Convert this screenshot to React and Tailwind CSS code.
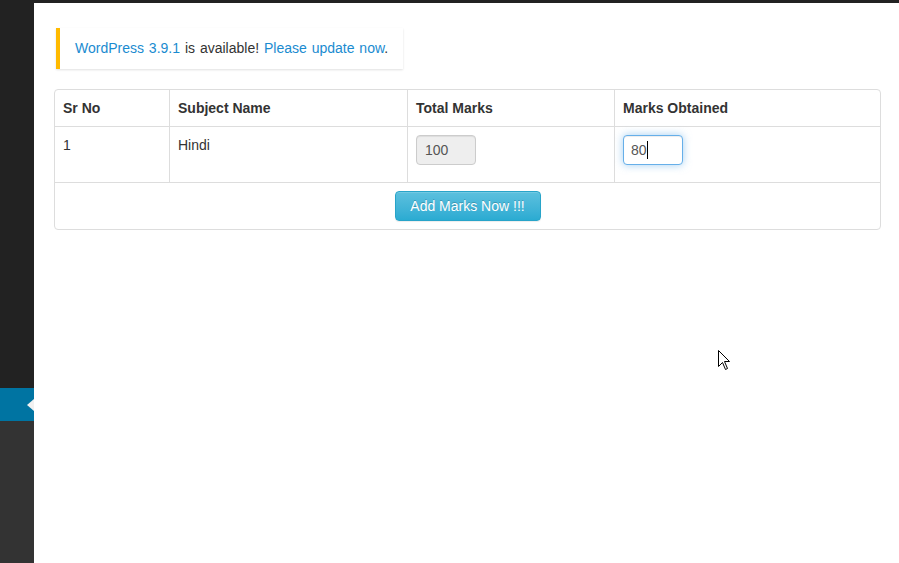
export default function App() {
  const font = { fontFamily: '"Liberation Sans", Arial, sans-serif' };
  return (
    <div className="w-[899px] h-[563px] flex flex-col bg-white overflow-hidden text-[#333]" style={font}>
      <div className="h-[3px] bg-[#222] shrink-0" />
      <div className="flex flex-1">
        <div className="w-[34px] flex flex-col shrink-0">
          <div className="h-[385px] bg-[#222]" />
          <div className="h-[33px] bg-[#0074a2] relative">
            <div className="absolute right-0 top-[11px] w-0 h-0 border-y-[6px] border-y-transparent border-r-[7px] border-r-[#f1f1f1]" />
          </div>
          <div className="flex-1 bg-[#333]" />
        </div>
        <div className="flex-1 relative pl-[20px] pr-[18px]">
          <div className="mt-[25px] ml-[2px] w-[347px] whitespace-nowrap bg-white border-l-4 border-[#ffba00] pl-[15px] py-[11px] text-[14px] leading-[19px] [word-spacing:1px] shadow-[0_1px_2px_0_rgba(0,0,0,0.12)]">
            <span className="text-[#1a8bd0]">WordPress 3.9.1</span> is available!{' '}
            <span className="text-[#1a8bd0]">Please update now</span>.
          </div>
          <div className="mt-[20px] border border-[#ddd] rounded-[4px] grid grid-cols-[114px_238px_207px_1fr] text-[14px] leading-[20px]">
            <div className="h-[37px] border-b border-[#ddd] px-[8px] pt-[8px] font-bold">Sr No</div>
            <div className="h-[37px] border-b border-l border-[#ddd] px-[8px] pt-[8px] font-bold">Subject Name</div>
            <div className="h-[37px] border-b border-l border-[#ddd] px-[8px] pt-[8px] font-bold">Total Marks</div>
            <div className="h-[37px] border-b border-l border-[#ddd] px-[8px] pt-[8px] font-bold">Marks Obtained</div>

            <div className="h-[56px] border-b border-[#ddd] px-[8px] pt-[8px]">1</div>
            <div className="h-[56px] border-b border-l border-[#ddd] px-[8px] pt-[8px]">Hindi</div>
            <div className="h-[56px] border-b border-l border-[#ddd] px-[8px] pt-[8px]">
              <div className="w-[60px] h-[30px] border border-[#ccc] rounded-[4px] bg-[#eee] pl-[8px] pt-[4px] text-[#555] shadow-[inset_0_1px_1px_rgba(0,0,0,0.075)]">100</div>
            </div>
            <div className="h-[56px] border-b border-l border-[#ddd] px-[8px] pt-[8px]">
              <div className="w-[60px] h-[30px] border border-[#66afe9] rounded-[4px] bg-white pl-[7px] pt-[4px] text-[#555] flex items-start shadow-[inset_0_1px_1px_rgba(0,0,0,0.075),0_0_8px_rgba(102,175,233,0.6)]">
                <span>80</span>
                <span className="w-[1px] h-[18px] bg-black mt-[1px]" />
              </div>
            </div>

            <div className="col-span-4 h-[46px] flex items-center justify-center">
              <button className="w-[146px] h-[30px] rounded-[4px] border border-[#28a4c9] text-white text-[14px] bg-gradient-to-b from-[#5bc0de] to-[#2aabd2] shadow-[inset_0_1px_0_rgba(255,255,255,0.15),0_1px_1px_rgba(0,0,0,0.075)] [text-shadow:0_-1px_0_rgba(0,0,0,0.2)]" style={font}>
                Add Marks Now !!!
              </button>
            </div>
          </div>
          <svg className="absolute left-[684px] top-[347px]" width="14" height="21" viewBox="0 0 14 21">
            <path d="M0.5 0.5 L0.5 16.5 L4.5 12.5 L7.5 19.5 L9.5 18.5 L6.5 11.5 L11.5 11.5 Z" fill="white" stroke="black" strokeWidth="1" strokeLinejoin="miter" />
          </svg>
        </div>
      </div>
    </div>
  );
}
